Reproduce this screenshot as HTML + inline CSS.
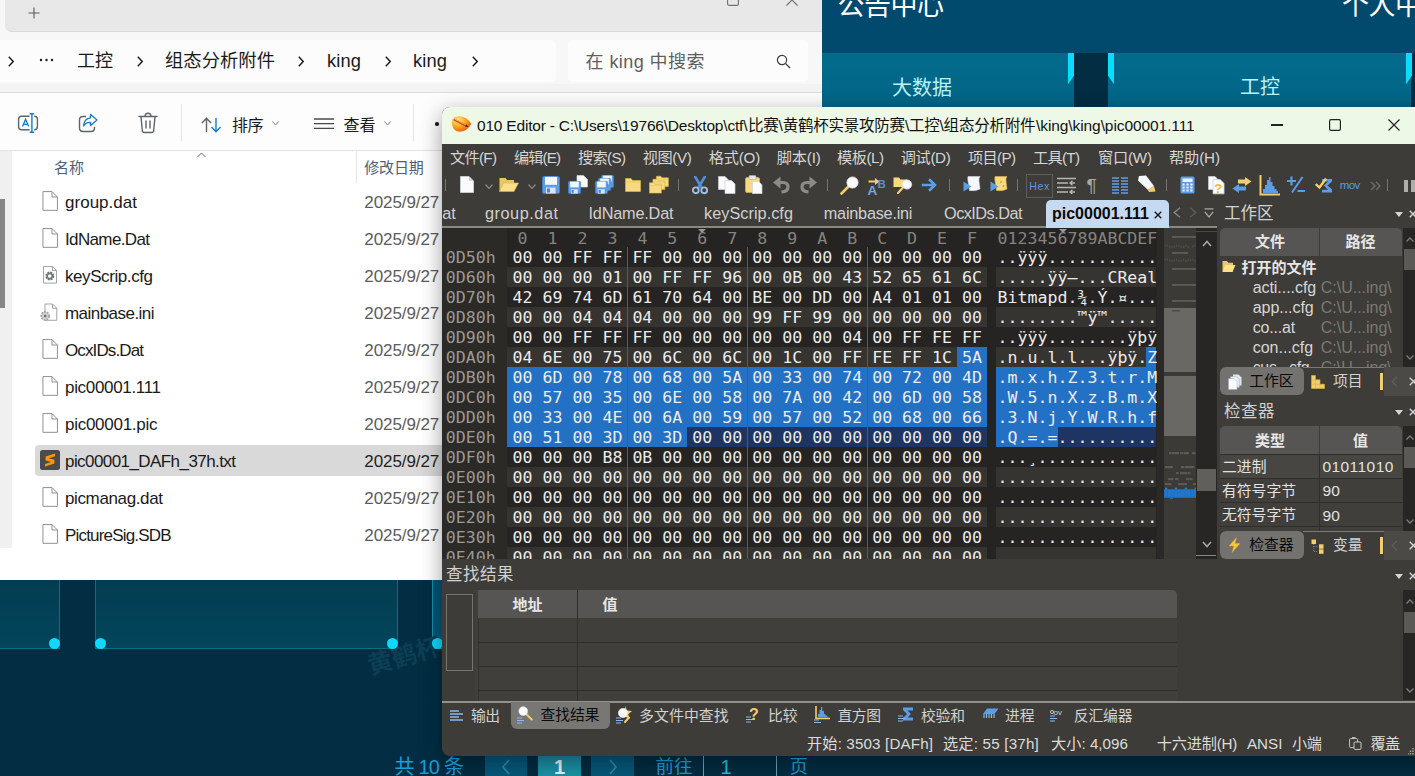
<!DOCTYPE html><html lang="zh-CN"><head><meta charset="utf-8"><title>010 Editor</title><style>
html,body{margin:0;padding:0}
body{width:1415px;height:776px;overflow:hidden;position:relative;background:#022d42;font-family:"Liberation Sans","Noto Sans CJK SC",sans-serif}
.L{position:absolute;overflow:hidden}
.L div,.L span.t,.L svg{position:absolute}
span.t{white-space:pre;display:block}
</style></head><body>
<div class="L" id="web" style="left:0;top:0;width:1415px;height:776px"><div style="left:0px;top:0px;width:1415px;height:53px;background:#014a6e;"></div>
<span class="t" style="left:837.5px;top:-11.00px;font:400 27px/35px 'Liberation Sans','Noto Sans CJK SC',sans-serif;color:#ffffff;letter-spacing:-0.500px;">公告中心</span>
<span class="t" style="left:1342px;top:-11.00px;font:400 27px/35px 'Liberation Sans','Noto Sans CJK SC',sans-serif;color:#ffffff;letter-spacing:-0.500px;">个人中心</span>
<div style="left:560px;top:53px;width:513.7px;height:54px;background:linear-gradient(#026b8c,#026586);"></div>
<div style="left:1108px;top:53px;width:303px;height:54px;background:linear-gradient(#026b8c,#026586);"></div>
<svg style="left:1067.8px;top:53px" width="6" height="32" viewBox="0 0 6 32"><polygon points="0,0 6,0 6,22.6 0,31.2" fill="#08defc"/></svg>
<svg style="left:1108px;top:53px" width="6" height="32" viewBox="0 0 6 32"><polygon points="0,0 6,0 6,31.2 0,22.6" fill="#08defc"/></svg>
<svg style="left:1405.5px;top:53px" width="6" height="32" viewBox="0 0 6 32"><polygon points="0,0 6,0 6,22.6 0,31.2" fill="#08defc"/></svg>
<span class="t" style="left:892px;top:74.50px;font:400 20px/26px 'Liberation Sans','Noto Sans CJK SC',sans-serif;color:#b8f4ff;">大数据</span>
<span class="t" style="left:1240px;top:74.00px;font:400 20px/26px 'Liberation Sans','Noto Sans CJK SC',sans-serif;color:#b8f4ff;">工控</span>
<div style="left:-10px;top:560px;width:69.5px;height:88.5px;background:linear-gradient(#033a4e,#03455b);border:1px solid #0e6d80;box-sizing:border-box;"></div>
<div style="left:94.5px;top:560px;width:303px;height:88.5px;background:linear-gradient(#033a4e,#03455b);border:1px solid #0e6d80;box-sizing:border-box;"></div>
<div style="left:432px;top:560px;width:303px;height:88.5px;background:linear-gradient(#04506f,#045a7c);border:1px solid #1590a8;box-sizing:border-box;"></div>
<span class="t" style="left:368px;top:650.00px;font:700 25px/32px 'Liberation Sans','Noto Sans CJK SC',sans-serif;color:#0b3f54;transform:rotate(-16deg);transform-origin:0 50%;">黄鹤杯</span>
<div style="left:48.5px;top:637.5px;width:11px;height:11px;background:#10d8fa;border-radius:50%;"></div>
<div style="left:94.5px;top:637.5px;width:11px;height:11px;background:#10d8fa;border-radius:50%;"></div>
<div style="left:386.5px;top:637.5px;width:11px;height:11px;background:#10d8fa;border-radius:50%;"></div>
<div style="left:431.5px;top:637.5px;width:11px;height:11px;background:#10d8fa;border-radius:50%;"></div>
<span class="t" style="left:394.5px;top:753.50px;font:400 20px/26px 'Liberation Sans','Noto Sans CJK SC',sans-serif;color:#1a9fd8;letter-spacing:-0.772px;">共 10 条</span>
<div style="left:485px;top:752px;width:42px;height:30px;background:#06587b;"></div>
<div style="left:538px;top:752px;width:43px;height:30px;background:linear-gradient(#1c8aa2,#1a96a8);"></div>
<div style="left:590.75px;top:752px;width:43px;height:30px;background:#06587b;"></div>
<svg style="left:501px;top:759px" width="10" height="16" viewBox="0 0 10 16"><path d="M8 1 L2 8 L8 15" fill="none" stroke="#2a8fb0" stroke-width="1.6"/></svg>
<svg style="left:608px;top:759px" width="10" height="16" viewBox="0 0 10 16"><path d="M2 1 L8 8 L2 15" fill="none" stroke="#2a8fb0" stroke-width="1.6"/></svg>
<span class="t" style="left:559.5px;top:754.00px;font:700 20px/26px 'Liberation Sans','Noto Sans CJK SC',sans-serif;color:#e8f4f8;transform:translateX(-50%);">1</span>
<span class="t" style="left:655.5px;top:754.50px;font:400 18.5px/24px 'Liberation Sans','Noto Sans CJK SC',sans-serif;color:#1a9fd8;letter-spacing:-0.016px;">前往</span>
<div style="left:703px;top:740px;width:73.5px;height:40px;border-left:1px solid #6fa3b8;border-right:1px solid #6fa3b8;box-sizing:border-box;"></div>
<span class="t" style="left:720.5px;top:754.00px;font:400 20px/26px 'Liberation Sans','Noto Sans CJK SC',sans-serif;color:#22c4dc;">1</span>
<span class="t" style="left:789.5px;top:754.50px;font:400 18.5px/24px 'Liberation Sans','Noto Sans CJK SC',sans-serif;color:#1a9fd8;">页</span></div>
<div class="L" id="exp" style="left:0;top:0;width:822px;height:579.5px;background:#fff"><div style="left:0px;top:0px;width:822px;height:93px;background:#f7f7f7;"></div>
<div style="left:5px;top:-8px;width:830px;height:39.3px;background:#e8e8e8;border-radius:7px;border-bottom:1px solid #dadada;"></div>
<svg style="left:28px;top:7px" width="12" height="12" viewBox="0 0 12 12"><path d="M6 0.5V11.5M0.5 6H11.5" stroke="#5a5a5a" stroke-width="1.1"/></svg>
<svg style="left:727px;top:-6px" width="12" height="12" viewBox="0 0 12 12"><rect x="0.6" y="0.6" width="10.8" height="10.8" rx="1.5" fill="none" stroke="#707070" stroke-width="1.1"/></svg>
<svg style="left:786px;top:-6px" width="12" height="12" viewBox="0 0 12 12"><path d="M0.5 0.5L11.5 11.5M11.5 0.5L0.5 11.5" stroke="#707070" stroke-width="1.1"/></svg>
<div style="left:-10px;top:40px;width:566px;height:42px;background:#fcfcfc;border-radius:5px;"></div>
<div style="left:0px;top:84px;width:822px;height:8px;background:#f3f3f3;"></div>
<div style="left:568px;top:40px;width:240px;height:42px;background:#fcfcfc;border-radius:5px;"></div>
<svg style="left:8.0px;top:56.4px" width="6" height="11" viewBox="0 0 6 11"><path d="M0.8 0.8L5.2 5.5L0.8 10.2" fill="none" stroke="#1a1a1a" stroke-width="1.4"/></svg>
<svg style="left:136.5px;top:56.4px" width="6" height="11" viewBox="0 0 6 11"><path d="M0.8 0.8L5.2 5.5L0.8 10.2" fill="none" stroke="#1a1a1a" stroke-width="1.4"/></svg>
<svg style="left:298.0px;top:56.4px" width="6" height="11" viewBox="0 0 6 11"><path d="M0.8 0.8L5.2 5.5L0.8 10.2" fill="none" stroke="#1a1a1a" stroke-width="1.4"/></svg>
<svg style="left:385.0px;top:56.4px" width="6" height="11" viewBox="0 0 6 11"><path d="M0.8 0.8L5.2 5.5L0.8 10.2" fill="none" stroke="#1a1a1a" stroke-width="1.4"/></svg>
<svg style="left:471.5px;top:56.4px" width="6" height="11" viewBox="0 0 6 11"><path d="M0.8 0.8L5.2 5.5L0.8 10.2" fill="none" stroke="#1a1a1a" stroke-width="1.4"/></svg>
<svg style="left:39px;top:58px" width="15" height="4" viewBox="0 0 15 4"><circle cx="2" cy="2" r="1.2" fill="#1a1a1a"/><circle cx="7.5" cy="2" r="1.2" fill="#1a1a1a"/><circle cx="13" cy="2" r="1.2" fill="#1a1a1a"/></svg>
<span class="t" style="left:77px;top:49.90px;font:400 18px/23px 'Liberation Sans','Noto Sans CJK SC',sans-serif;color:#1a1a1a;">工控</span>
<span class="t" style="left:165px;top:49.40px;font:400 18.3px/24px 'Liberation Sans','Noto Sans CJK SC',sans-serif;color:#1a1a1a;letter-spacing:0.062px;">组态分析附件</span>
<span class="t" style="left:327px;top:49.20px;font:400 18.3px/24px 'Liberation Sans','Noto Sans CJK SC',sans-serif;color:#1a1a1a;letter-spacing:0.151px;">king</span>
<span class="t" style="left:413px;top:49.20px;font:400 18.3px/24px 'Liberation Sans','Noto Sans CJK SC',sans-serif;color:#1a1a1a;letter-spacing:0.151px;">king</span>
<span class="t" style="left:585.5px;top:50.70px;font:400 18px/23px 'Liberation Sans','Noto Sans CJK SC',sans-serif;color:#5f5f5f;letter-spacing:0.441px;">在 king 中搜索</span>
<svg style="left:776px;top:54px" width="15" height="15" viewBox="0 0 15 15"><circle cx="6" cy="6" r="4.6" fill="none" stroke="#3a3a3a" stroke-width="1.2"/><path d="M9.4 9.4L14 14" stroke="#3a3a3a" stroke-width="1.3"/></svg>
<div style="left:0px;top:92px;width:822px;height:1px;background:#dcdcdc;"></div>
<div style="left:0px;top:93px;width:822px;height:57px;background:#fdfdfd;"></div>
<div style="left:0px;top:150px;width:822px;height:1px;background:#e3e3e3;"></div>
<svg style="left:17px;top:112.6px" width="22" height="20" viewBox="0 0 22 20"><path d="M12.6 3.2H4.5Q1.6 3.2 1.6 6.2V13.8Q1.6 16.8 4.5 16.8H12.6M17.2 3.2Q20.4 3.2 20.4 6.2V13.8Q20.4 16.8 17.2 16.8" fill="none" stroke="#5e6468" stroke-width="1.4"/><path d="M5.6 13.6L8.6 6.2L11.6 13.6M6.6 11.3H10.6" fill="none" stroke="#1479d0" stroke-width="1.3"/><path d="M14.9 0.7V19.3M12.6 0.7H17.2M12.6 19.3H17.2" stroke="#1479d0" stroke-width="1.4"/></svg>
<svg style="left:78px;top:113.4px" width="21" height="21" viewBox="0 0 21 21"><path d="M8 3.5H5Q1.5 3.5 1.5 7V15Q1.5 18.5 5 18.5H13Q16.5 18.5 16.5 15V14" fill="none" stroke="#5e6468" stroke-width="1.4"/><path d="M12.5 1.5L19 7L12.5 12.5V9.3Q8 9 5.5 13Q6 5.5 12.5 4.8Z" fill="none" stroke="#1479d0" stroke-width="1.3" stroke-linejoin="round"/></svg>
<svg style="left:138px;top:112.3px" width="20" height="22" viewBox="0 0 20 22"><path d="M1 4.5H19M7 4.3Q7 1.2 10 1.2Q13 1.2 13 4.3M3 4.8L4.3 18.5Q4.5 20.5 6.5 20.5H13.5Q15.5 20.5 15.7 18.5L17 4.8M8 9V16M12 9V16" fill="none" stroke="#5e6468" stroke-width="1.4" stroke-linecap="round"/></svg>
<div style="left:181px;top:104px;width:1px;height:37px;background:#e6e6e6;"></div>
<svg style="left:201px;top:116.5px" width="21" height="16" viewBox="0 0 21 16"><path d="M5.5 15V1.5M1 6L5.5 1.2L10 6" fill="none" stroke="#5e6468" stroke-width="1.4"/><path d="M15 1V14.5M10.5 10L15 14.8L19.5 10" fill="none" stroke="#1479d0" stroke-width="1.4"/></svg>
<span class="t" style="left:232px;top:114.50px;font:400 16px/21px 'Liberation Sans','Noto Sans CJK SC',sans-serif;color:#1a1a1a;letter-spacing:-0.516px;">排序</span>
<svg style="left:271.5px;top:120.5px" width="7" height="5" viewBox="0 0 7 5"><path d="M0.5 0.5L3.5 4L6.5 0.5" fill="none" stroke="#7a7a7a" stroke-width="1"/></svg>
<svg style="left:313.5px;top:118.3px" width="20" height="12" viewBox="0 0 20 12"><path d="M0 1H20M0 5.65H20M0 10.3H20" stroke="#4a4a4a" stroke-width="1.3"/></svg>
<span class="t" style="left:343.5px;top:114.50px;font:400 16px/21px 'Liberation Sans','Noto Sans CJK SC',sans-serif;color:#1a1a1a;letter-spacing:-0.016px;">查看</span>
<svg style="left:383.5px;top:120.5px" width="7" height="5" viewBox="0 0 7 5"><path d="M0.5 0.5L3.5 4L6.5 0.5" fill="none" stroke="#7a7a7a" stroke-width="1"/></svg>
<div style="left:413px;top:104px;width:1px;height:37px;background:#e6e6e6;"></div>
<div style="left:435.2px;top:122.2px;width:3.6px;height:3.6px;background:#1a1a1a;border-radius:50%;"></div>
<div style="left:0px;top:151px;width:12px;height:397px;background:#f0f0f0;"></div>
<div style="left:0px;top:199px;width:5px;height:108.5px;background:#868686;"></div>
<svg style="left:197px;top:151.5px" width="9" height="6" viewBox="0 0 9 6"><path d="M0.5 5L4.5 1L8.5 5" fill="none" stroke="#6a6a6a" stroke-width="1"/></svg>
<span class="t" style="left:54px;top:157.70px;font:400 15px/20px 'Liberation Sans','Noto Sans CJK SC',sans-serif;color:#4c607a;letter-spacing:-0.016px;">名称</span>
<div style="left:356px;top:151px;width:1px;height:32px;background:#e5e5e5;"></div>
<span class="t" style="left:364.3px;top:157.70px;font:400 15px/20px 'Liberation Sans','Noto Sans CJK SC',sans-serif;color:#4c607a;letter-spacing:-0.172px;">修改日期</span>
<svg style="left:41.8px;top:190.9px" width="16.2" height="20" viewBox="0 0 17 21"><path d="M1 0.6H10.5L16.2 6.3V20.3H1Z" fill="#fff" stroke="#8c8c8c" stroke-width="1"/><path d="M10.5 0.6V6.3H16.2" fill="none" stroke="#8c8c8c" stroke-width="1"/></svg>
<span class="t" style="left:65px;top:192.00px;font:400 17px/22px 'Liberation Sans','Noto Sans CJK SC',sans-serif;color:#1a1a1a;letter-spacing:0.020px;">group.dat</span>
<span class="t" style="left:364.3px;top:192.00px;font:400 17px/22px 'Liberation Sans','Noto Sans CJK SC',sans-serif;color:#5c5c5c;letter-spacing:-0.081px;">2025/9/27 1</span>
<svg style="left:41.8px;top:227.95000000000002px" width="16.2" height="20" viewBox="0 0 17 21"><path d="M1 0.6H10.5L16.2 6.3V20.3H1Z" fill="#fff" stroke="#8c8c8c" stroke-width="1"/><path d="M10.5 0.6V6.3H16.2" fill="none" stroke="#8c8c8c" stroke-width="1"/></svg>
<span class="t" style="left:65px;top:229.05px;font:400 17px/22px 'Liberation Sans','Noto Sans CJK SC',sans-serif;color:#1a1a1a;letter-spacing:-0.634px;">IdName.Dat</span>
<span class="t" style="left:364.3px;top:229.05px;font:400 17px/22px 'Liberation Sans','Noto Sans CJK SC',sans-serif;color:#5c5c5c;letter-spacing:-0.081px;">2025/9/27 1</span>
<svg style="left:43px;top:266.20000000000005px" width="14" height="17.6" viewBox="0 0 14 17.6"><path d="M0.5 0.5H9.5L13.5 4.5V17.1H0.5Z" fill="#fff" stroke="#9a9a9a" stroke-width="0.9"/><path d="M9.5 0.5V4.5H13.5" fill="none" stroke="#9a9a9a" stroke-width="0.9"/><circle cx="6.8" cy="10" r="3.3" fill="none" stroke="#6b7478" stroke-width="2.3" stroke-dasharray="1.75 0.85"/><circle cx="6.8" cy="10" r="2.6" fill="none" stroke="#6b7478" stroke-width="1.5"/></svg>
<span class="t" style="left:65px;top:266.10px;font:400 17px/22px 'Liberation Sans','Noto Sans CJK SC',sans-serif;color:#1a1a1a;letter-spacing:-0.418px;">keyScrip.cfg</span>
<span class="t" style="left:364.3px;top:266.10px;font:400 17px/22px 'Liberation Sans','Noto Sans CJK SC',sans-serif;color:#5c5c5c;letter-spacing:-0.081px;">2025/9/27 1</span>
<svg style="left:40px;top:302.04999999999995px" width="19" height="21" viewBox="-2 0 19 21"><path d="M3 2H10.5L14.8 6.3V18.3H3Z" fill="#fff" stroke="#9a9a9a" stroke-width="0.9"/><path d="M10.5 2V6.3H14.8" fill="none" stroke="#9a9a9a" stroke-width="0.9"/><circle cx="3.2" cy="14" r="3.9" fill="#d4d4d4" stroke="#a2a6a8" stroke-width="2" stroke-dasharray="1.8 1"/><circle cx="3.2" cy="14" r="3" fill="#d0d0d0"/><circle cx="3.2" cy="14" r="1.3" fill="#6a6a6a"/></svg>
<span class="t" style="left:65px;top:303.15px;font:400 17px/22px 'Liberation Sans','Noto Sans CJK SC',sans-serif;color:#1a1a1a;letter-spacing:-0.541px;">mainbase.ini</span>
<span class="t" style="left:364.3px;top:303.15px;font:400 17px/22px 'Liberation Sans','Noto Sans CJK SC',sans-serif;color:#5c5c5c;letter-spacing:-0.081px;">2025/9/27 1</span>
<svg style="left:41.8px;top:339.09999999999997px" width="16.2" height="20" viewBox="0 0 17 21"><path d="M1 0.6H10.5L16.2 6.3V20.3H1Z" fill="#fff" stroke="#8c8c8c" stroke-width="1"/><path d="M10.5 0.6V6.3H16.2" fill="none" stroke="#8c8c8c" stroke-width="1"/></svg>
<span class="t" style="left:65px;top:340.20px;font:400 17px/22px 'Liberation Sans','Noto Sans CJK SC',sans-serif;color:#1a1a1a;letter-spacing:-0.878px;">OcxIDs.Dat</span>
<span class="t" style="left:364.3px;top:340.20px;font:400 17px/22px 'Liberation Sans','Noto Sans CJK SC',sans-serif;color:#5c5c5c;letter-spacing:-0.081px;">2025/9/27 1</span>
<svg style="left:41.8px;top:376.15px" width="16.2" height="20" viewBox="0 0 17 21"><path d="M1 0.6H10.5L16.2 6.3V20.3H1Z" fill="#fff" stroke="#8c8c8c" stroke-width="1"/><path d="M10.5 0.6V6.3H16.2" fill="none" stroke="#8c8c8c" stroke-width="1"/></svg>
<span class="t" style="left:65px;top:377.25px;font:400 17px/22px 'Liberation Sans','Noto Sans CJK SC',sans-serif;color:#1a1a1a;letter-spacing:-0.325px;">pic00001.111</span>
<span class="t" style="left:364.3px;top:377.25px;font:400 17px/22px 'Liberation Sans','Noto Sans CJK SC',sans-serif;color:#5c5c5c;letter-spacing:-0.081px;">2025/9/27 1</span>
<svg style="left:41.8px;top:413.19999999999993px" width="16.2" height="20" viewBox="0 0 17 21"><path d="M1 0.6H10.5L16.2 6.3V20.3H1Z" fill="#fff" stroke="#8c8c8c" stroke-width="1"/><path d="M10.5 0.6V6.3H16.2" fill="none" stroke="#8c8c8c" stroke-width="1"/></svg>
<span class="t" style="left:65px;top:414.30px;font:400 17px/22px 'Liberation Sans','Noto Sans CJK SC',sans-serif;color:#1a1a1a;letter-spacing:-0.270px;">pic00001.pic</span>
<span class="t" style="left:364.3px;top:414.30px;font:400 17px/22px 'Liberation Sans','Noto Sans CJK SC',sans-serif;color:#5c5c5c;letter-spacing:-0.081px;">2025/9/27 1</span>
<div style="left:35px;top:444.9px;width:800px;height:30.9px;background:#d9d9d9;border-radius:4px;"></div>
<svg style="left:40px;top:449.84999999999997px" width="20" height="20" viewBox="0 0 20 20"><rect width="20" height="20" rx="2.5" fill="#4b4b4b"/><path d="M15 3.6L5.6 6.6V10.4L11.2 11.9L5 13.9V16.6L14.4 13.6V9.8L8.8 8.3L15 6.3Z" fill="#ff9800"/></svg>
<span class="t" style="left:65px;top:451.35px;font:400 17px/22px 'Liberation Sans','Noto Sans CJK SC',sans-serif;color:#1a1a1a;letter-spacing:-0.570px;">pic00001_DAFh_37h.txt</span>
<span class="t" style="left:364.3px;top:451.35px;font:400 17px/22px 'Liberation Sans','Noto Sans CJK SC',sans-serif;color:#1f1f1f;letter-spacing:-0.081px;">2025/9/27 1</span>
<svg style="left:41.8px;top:487.29999999999995px" width="16.2" height="20" viewBox="0 0 17 21"><path d="M1 0.6H10.5L16.2 6.3V20.3H1Z" fill="#fff" stroke="#8c8c8c" stroke-width="1"/><path d="M10.5 0.6V6.3H16.2" fill="none" stroke="#8c8c8c" stroke-width="1"/></svg>
<span class="t" style="left:65px;top:488.40px;font:400 17px/22px 'Liberation Sans','Noto Sans CJK SC',sans-serif;color:#1a1a1a;letter-spacing:-0.371px;">picmanag.dat</span>
<span class="t" style="left:364.3px;top:488.40px;font:400 17px/22px 'Liberation Sans','Noto Sans CJK SC',sans-serif;color:#5c5c5c;letter-spacing:-0.081px;">2025/9/27 1</span>
<svg style="left:41.8px;top:524.35px" width="16.2" height="20" viewBox="0 0 17 21"><path d="M1 0.6H10.5L16.2 6.3V20.3H1Z" fill="#fff" stroke="#8c8c8c" stroke-width="1"/><path d="M10.5 0.6V6.3H16.2" fill="none" stroke="#8c8c8c" stroke-width="1"/></svg>
<span class="t" style="left:65px;top:525.45px;font:400 17px/22px 'Liberation Sans','Noto Sans CJK SC',sans-serif;color:#1a1a1a;letter-spacing:-0.821px;">PictureSig.SDB</span>
<span class="t" style="left:364.3px;top:525.45px;font:400 17px/22px 'Liberation Sans','Noto Sans CJK SC',sans-serif;color:#5c5c5c;letter-spacing:-0.081px;">2025/9/27 1</span></div>
<div id="shadow" style="position:absolute;left:442px;top:107px;width:990px;height:649px;border-radius:8px;box-shadow:0 6px 22px rgba(0,0,0,.38)"></div>
<div class="L" id="ed" style="left:0;top:0;width:1415px;height:776px;clip-path:inset(107px -20px 20px 442px round 8px)"><div style="left:430px;top:100px;width:1000px;height:680px;background:#3e3c38;"></div>
<div style="left:430px;top:100px;width:1000px;height:44px;background:#eef8e6;"></div>
<svg style="left:450.5px;top:115px" width="21" height="18" viewBox="0 0 21 18"><defs><radialGradient id="og" cx="30%" cy="25%" r="85%"><stop offset="0" stop-color="#ffe88a"/><stop offset="0.4" stop-color="#ffb424"/><stop offset="1" stop-color="#e4520e"/></radialGradient></defs><path d="M0.8 7.5Q1 1 8.5 1.2Q16.5 1.8 20.3 9Q16 16.8 8.5 16.8Q1 16 0.8 7.5Z" fill="url(#og)"/><path d="M3.2 3.6L15.2 9.6L17.8 12L14.2 11.4L2.4 5.2Z" fill="#c9452c"/><path d="M3.6 4.1L14.6 9.7" stroke="#f6c95e" stroke-width="0.9"/><path d="M15.2 9.6L17.8 12L14.2 11.4Z" fill="#3a2a20"/></svg>
<span class="t" style="left:477px;top:115.50px;font:400 15.5px/20px 'Liberation Sans','Noto Sans CJK SC',sans-serif;color:#111;letter-spacing:-0.200px;">010 Editor - C:\Users\19766\Desktop\ctf\</span>
<span class="t" style="left:748px;top:115.50px;font:400 15.5px/20px 'Liberation Sans','Noto Sans CJK SC',sans-serif;color:#111;letter-spacing:-0.221px;">比赛\黄鹤杯实景攻防赛\工控\组态分析附件</span>
<span class="t" style="left:1036px;top:115.50px;font:400 15.5px/20px 'Liberation Sans','Noto Sans CJK SC',sans-serif;color:#111;letter-spacing:-0.083px;">\king\king\pic00001.111</span>
<div style="left:1271px;top:124.4px;width:12px;height:1.3px;background:#222;"></div>
<svg style="left:1329px;top:119px" width="12" height="12" viewBox="0 0 12 12"><rect x="0.6" y="0.6" width="10.8" height="10.8" rx="1.3" fill="none" stroke="#222" stroke-width="1.2"/></svg>
<svg style="left:1388px;top:119px" width="12" height="12" viewBox="0 0 12 12"><path d="M0.5 0.5L11.5 11.5M11.5 0.5L0.5 11.5" stroke="#222" stroke-width="1.2"/></svg>
<span class="t" style="left:450px;top:148.00px;font:400 15.2px/20px 'Liberation Sans','Noto Sans CJK SC',sans-serif;color:#d6d6d6;letter-spacing:-0.695px;">文件(F)</span>
<span class="t" style="left:514px;top:148.00px;font:400 15.2px/20px 'Liberation Sans','Noto Sans CJK SC',sans-serif;color:#d6d6d6;letter-spacing:-0.906px;">编辑(E)</span>
<span class="t" style="left:578px;top:148.00px;font:400 15.2px/20px 'Liberation Sans','Noto Sans CJK SC',sans-serif;color:#d6d6d6;letter-spacing:-0.656px;">搜索(S)</span>
<span class="t" style="left:642.75px;top:148.00px;font:400 15.2px/20px 'Liberation Sans','Noto Sans CJK SC',sans-serif;color:#d6d6d6;letter-spacing:-0.406px;">视图(V)</span>
<span class="t" style="left:708.75px;top:148.00px;font:400 15.2px/20px 'Liberation Sans','Noto Sans CJK SC',sans-serif;color:#d6d6d6;letter-spacing:-0.203px;">格式(O)</span>
<span class="t" style="left:776.75px;top:148.00px;font:400 15.2px/20px 'Liberation Sans','Noto Sans CJK SC',sans-serif;color:#d6d6d6;letter-spacing:-0.180px;">脚本(I)</span>
<span class="t" style="left:837px;top:148.00px;font:400 15.2px/20px 'Liberation Sans','Noto Sans CJK SC',sans-serif;color:#d6d6d6;letter-spacing:-0.484px;">模板(L)</span>
<span class="t" style="left:900.75px;top:148.00px;font:400 15.2px/20px 'Liberation Sans','Noto Sans CJK SC',sans-serif;color:#d6d6d6;letter-spacing:-0.367px;">调试(D)</span>
<span class="t" style="left:968px;top:148.00px;font:400 15.2px/20px 'Liberation Sans','Noto Sans CJK SC',sans-serif;color:#d6d6d6;letter-spacing:-0.656px;">项目(P)</span>
<span class="t" style="left:1033px;top:148.00px;font:400 15.2px/20px 'Liberation Sans','Noto Sans CJK SC',sans-serif;color:#d6d6d6;letter-spacing:-0.695px;">工具(T)</span>
<span class="t" style="left:1098px;top:148.00px;font:400 15.2px/20px 'Liberation Sans','Noto Sans CJK SC',sans-serif;color:#d6d6d6;letter-spacing:-0.207px;">窗口(W)</span>
<span class="t" style="left:1169px;top:148.00px;font:400 15.2px/20px 'Liberation Sans','Noto Sans CJK SC',sans-serif;color:#d6d6d6;letter-spacing:-0.117px;">帮助(H)</span>
<div style="left:445.1px;top:179px;width:1px;height:12px;background:#77756f;"></div>
<svg style="left:460px;top:176px" width="14" height="17" viewBox="0 0 14 17"><path d="M0.5 0.5H9L13.5 5V16.5H0.5Z" fill="#fbfbfb" stroke="#d0d6e0" stroke-width="0.8"/><path d="M9 0.5V5H13.5Z" fill="#c9d2e0"/></svg>
<svg style="left:485.0px;top:183.75px" width="8" height="5.5" viewBox="0 0 8 5.5"><path d="M0.5 0.5L4.0 4.5L7.5 0.5" fill="none" stroke="#8a8884" stroke-width="1.2"/></svg>
<svg style="left:498.5px;top:176px" width="20" height="17" viewBox="0 0 20 17"><path d="M0.5 2H6.5L8 4H15V15H0.5Z" fill="#e9c766"/><path d="M4.5 7H19.5L15 15.5H0.5Z" fill="#fbe08c" stroke="#d9b24a" stroke-width="0.6"/></svg>
<svg style="left:527.5px;top:183.75px" width="8" height="5.5" viewBox="0 0 8 5.5"><path d="M0.5 0.5L4.0 4.5L7.5 0.5" fill="none" stroke="#8a8884" stroke-width="1.2"/></svg>
<svg style="left:542px;top:175.5px" width="18" height="18" viewBox="0 0 18 18"><rect x="0.5" y="0.5" width="17" height="17" rx="1.5" fill="#5d9de6" stroke="#3f7fd0" stroke-width="0.8"/><rect x="3" y="0.8" width="12" height="8" fill="#f3f7fc"/><rect x="4" y="11.5" width="9.5" height="6" fill="#d8e6f8"/><rect x="5" y="12.5" width="3" height="4" fill="#4a86d6"/></svg>
<svg style="left:568px;top:175px" width="20" height="19" viewBox="0 0 20 19"><path d="M9 0.5H15.5L19.5 4.5V12H9Z" fill="#fbfbfb" stroke="#c9d2e0" stroke-width="0.7"/><g transform="translate(0 6) scale(0.72)"><rect x="0.5" y="0.5" width="17" height="17" rx="1.5" fill="#5d9de6" stroke="#3f7fd0" stroke-width="0.8"/><rect x="3" y="0.8" width="12" height="8" fill="#f3f7fc"/><rect x="4" y="11.5" width="9.5" height="6" fill="#d8e6f8"/><rect x="5" y="12.5" width="3" height="4" fill="#4a86d6"/></g></svg>
<svg style="left:595px;top:175px" width="20" height="19" viewBox="0 0 20 19"><g transform="translate(6 0) scale(0.72)"><rect x="0.5" y="0.5" width="17" height="17" rx="1.5" fill="#5d9de6" stroke="#3f7fd0" stroke-width="0.8"/><rect x="3" y="0.8" width="12" height="8" fill="#f3f7fc"/><rect x="4" y="11.5" width="9.5" height="6" fill="#d8e6f8"/><rect x="5" y="12.5" width="3" height="4" fill="#4a86d6"/></g><g transform="translate(3 3) scale(0.72)"><rect x="0.5" y="0.5" width="17" height="17" rx="1.5" fill="#5d9de6" stroke="#3f7fd0" stroke-width="0.8"/><rect x="3" y="0.8" width="12" height="8" fill="#f3f7fc"/><rect x="4" y="11.5" width="9.5" height="6" fill="#d8e6f8"/><rect x="5" y="12.5" width="3" height="4" fill="#4a86d6"/></g><g transform="translate(0 6) scale(0.72)"><rect x="0.5" y="0.5" width="17" height="17" rx="1.5" fill="#5d9de6" stroke="#3f7fd0" stroke-width="0.8"/><rect x="3" y="0.8" width="12" height="8" fill="#f3f7fc"/><rect x="4" y="11.5" width="9.5" height="6" fill="#d8e6f8"/><rect x="5" y="12.5" width="3" height="4" fill="#4a86d6"/></g></svg>
<svg style="left:625px;top:177px" width="16" height="16" viewBox="0 0 16 16"><path d="M0.5 1.5H6L7.5 3.5H15.5V14.5H0.5Z" fill="#f7da80" stroke="#d9b24a" stroke-width="0.7"/><path d="M0.5 5H15.5" stroke="#e5c260" stroke-width="0.7"/></svg>
<svg style="left:648.5px;top:175px" width="21" height="19" viewBox="0 0 21 19"><g transform="translate(7 0) scale(0.8)"><path d="M0.5 1.5H6L7.5 3.5H15.5V14.5H0.5Z" fill="#f7da80" stroke="#d9b24a" stroke-width="0.7"/><path d="M0.5 5H15.5" stroke="#e5c260" stroke-width="0.7"/></g><g transform="translate(3.5 3) scale(0.8)"><path d="M0.5 1.5H6L7.5 3.5H15.5V14.5H0.5Z" fill="#f7da80" stroke="#d9b24a" stroke-width="0.7"/><path d="M0.5 5H15.5" stroke="#e5c260" stroke-width="0.7"/></g><g transform="translate(0 6.5) scale(0.8)"><path d="M0.5 1.5H6L7.5 3.5H15.5V14.5H0.5Z" fill="#f7da80" stroke="#d9b24a" stroke-width="0.7"/><path d="M0.5 5H15.5" stroke="#e5c260" stroke-width="0.7"/></g></svg>
<div style="left:678.2px;top:179px;width:1px;height:12px;background:#77756f;"></div>
<svg style="left:692px;top:175.5px" width="16" height="19" viewBox="0 0 16 19"><path d="M3.2 0.8L9.6 11.5M12.8 0.8L6.4 11.5" stroke="#4f8fdc" stroke-width="2.6" stroke-linecap="round"/><circle cx="3.8" cy="14.3" r="2.9" fill="none" stroke="#9dbfe8" stroke-width="1.9"/><circle cx="12.2" cy="14.3" r="2.9" fill="none" stroke="#9dbfe8" stroke-width="1.9"/></svg>
<svg style="left:717.5px;top:176px" width="18" height="18" viewBox="0 0 18 18"><path d="M0.5 0.5H7L10.5 4V13.5H0.5Z" fill="#fbfbfb" stroke="#c9d2e0" stroke-width="0.7"/><g transform="translate(6.5 4)"><path d="M0.5 0.5H7L10.5 4V13.5H0.5Z" fill="#fbfbfb" stroke="#c9d2e0" stroke-width="0.7"/></g></svg>
<svg style="left:745px;top:175px" width="18" height="19" viewBox="0 0 18 19"><rect x="0.5" y="2.5" width="14" height="15" rx="1.5" fill="#f7da80" stroke="#d9b24a" stroke-width="0.7"/><rect x="4" y="0.5" width="7" height="4" rx="1" fill="#e8e8e8" stroke="#aaa" stroke-width="0.6"/><g transform="translate(7 6) scale(0.95)"><path d="M0.5 0.5H7L10.5 4V13.5H0.5Z" fill="#fbfbfb" stroke="#c9d2e0" stroke-width="0.7"/></g></svg>
<svg style="left:771.5px;top:175.5px" width="19" height="18" viewBox="0 0 19 18"><path d="M1 6.5L8.5 0.5V12.5Z" fill="#8d8b86"/><path d="M7 6.5H11Q16 6.5 16 11Q16 15.5 9.5 16" fill="none" stroke="#8d8b86" stroke-width="3.2"/></svg>
<svg style="left:798.5px;top:175.5px" width="19" height="18" viewBox="0 0 19 18"><path d="M18 6.5L10.5 0.5V12.5Z" fill="#8d8b86"/><path d="M12 6.5H8Q3 6.5 3 11Q3 15.5 9.5 16" fill="none" stroke="#8d8b86" stroke-width="3.2"/></svg>
<div style="left:827.0px;top:179px;width:1px;height:12px;background:#77756f;"></div>
<svg style="left:839.5px;top:175.5px" width="20" height="19" viewBox="0 0 20 19"><path d="M1.5 17.5L9 10" stroke="#f2cf6a" stroke-width="2.6" stroke-linecap="round"/><circle cx="12.5" cy="6.5" r="5.6" fill="#fbfcfe" stroke="#e6e9ee" stroke-width="0.8"/></svg>
<svg style="left:866.5px;top:175.5px" width="20" height="19" viewBox="0 0 20 19"><path d="M1.5 4.5H8V2L12.5 5.5L8 9V6.5H1.5Z" fill="#f2cf6a"/><text x="0.5" y="18.5" font-family="Liberation Sans" font-weight="700" font-size="13.5" fill="#6ea6e8">A</text><text x="10.5" y="12" font-family="Liberation Sans" font-weight="700" font-size="11.5" fill="#5a8fd0">B</text></svg>
<svg style="left:892.5px;top:176px" width="20" height="18" viewBox="0 0 20 18"><path d="M0.5 1.5H6L7.5 3.5H14V11H0.5Z" fill="#f7da80"/><path d="M5 17L10 11.5" stroke="#f2cf6a" stroke-width="2.2" stroke-linecap="round"/><circle cx="14" cy="8.5" r="4.6" fill="#fbfcfe" stroke="#dfe3ea" stroke-width="0.8"/></svg>
<svg style="left:921px;top:178px" width="16" height="14" viewBox="0 0 16 14"><path d="M0.8 7H13M8 1.2L14 7L8 12.8" fill="none" stroke="#5d9de6" stroke-width="2.6" stroke-linejoin="miter"/></svg>
<div style="left:948.5px;top:179px;width:1px;height:12px;background:#77756f;"></div>
<svg style="left:962.5px;top:175px" width="19" height="18" viewBox="0 0 19 18"><path d="M5 1.5H17Q15.5 3 16 6L17 14Q13 16.5 6.5 15.5L5 6Q4.5 3 5 1.5Z" fill="#f4f7fb" stroke="#cfd6e2" stroke-width="0.6"/><path d="M0.5 6.5L8.5 11.5L0.5 16.5Z" fill="#5d9de6"/></svg>
<svg style="left:990px;top:175px" width="19" height="18" viewBox="0 0 19 18"><path d="M5 1.5H17Q15.5 3 16 6L17 14Q13 16.5 6.5 15.5L5 6Q4.5 3 5 1.5Z" fill="#f7da80" stroke="#d9b24a" stroke-width="0.6"/><path d="M0.5 6.5L8.5 11.5L0.5 16.5Z" fill="#5d9de6"/><circle cx="11" cy="7" r="1" fill="#c9a040"/><circle cx="13.5" cy="11" r="1" fill="#c9a040"/></svg>
<div style="left:1017.3px;top:179px;width:1px;height:12px;background:#77756f;"></div>
<div style="left:1026px;top:173.5px;width:27px;height:24px;border:1px solid #5f5d58;box-sizing:border-box;"></div>
<span class="t" style="left:1039.5px;top:178.50px;font:400 10.5px/14px 'Liberation Sans','Noto Sans CJK SC',sans-serif;color:#5e98dc;transform:translateX(-50%);letter-spacing:0.6px;">Hex</span>
<svg style="left:1057px;top:177px" width="19" height="17" viewBox="0 0 19 17"><path d="M0 1.5H19M0 6H11M0 10.5H19M0 15H11" stroke="#b8b6b0" stroke-width="1.6"/><path d="M18 6H13.5M15.5 3.8L13 6L15.5 8.2M18 15H13.5M15.5 12.8L13 15L15.5 17.2" fill="none" stroke="#b8b6b0" stroke-width="1.3"/></svg>
<span class="t" style="left:1091.5px;top:173.00px;font:400 19px/25px 'Liberation Sans','Noto Sans CJK SC',sans-serif;color:#a9a7a1;transform:translateX(-50%);">¶</span>
<svg style="left:1112px;top:177px" width="16" height="17" viewBox="0 0 16 17"><path d="M0 1H7M9 1H16M0 4H7M9 4H16M0 7H7M9 7H16M0 10H7M9 10H16M0 13H7M9 13H16M0 16H7M9 16H16" stroke="#5d9de6" stroke-width="1.5"/></svg>
<svg style="left:1136.5px;top:175px" width="19" height="19" viewBox="0 0 19 19"><path d="M2 1L9 0.5L17 11L11 15L1 5.5Z" fill="#f7f9fc"/><path d="M11 15L17 11L18.5 16.5L12 17Z" fill="#f2cf6a"/></svg>
<div style="left:1166.0px;top:179px;width:1px;height:12px;background:#77756f;"></div>
<svg style="left:1180px;top:176px" width="15" height="18" viewBox="0 0 15 18"><rect x="0.5" y="0.5" width="14" height="17" rx="1.5" fill="#5d9de6"/><rect x="2.5" y="2.5" width="10" height="3.5" fill="#eaf2fc"/><path d="M2.5 8.5H12.5M2.5 11.5H12.5M2.5 14.5H12.5" stroke="#eaf2fc" stroke-width="1.8" stroke-dasharray="2.2 1.7"/></svg>
<svg style="left:1207.5px;top:175.5px" width="17" height="19" viewBox="0 0 17 19"><path d="M0.5 0.5H7L10.5 4V13.5H0.5Z" fill="#fbfbfb" stroke="#c9d2e0" stroke-width="0.7"/><g transform="translate(4.5 3) scale(1.1)"><path d="M0.5 0.5H7L10.5 4V13.5H0.5Z" fill="#fbfbfb" stroke="#c9d2e0" stroke-width="0.7"/></g><text x="6.2" y="17" font-family="Liberation Sans" font-weight="700" font-size="13" fill="#e9b93c">?</text></svg>
<svg style="left:1232px;top:177px" width="20" height="16" viewBox="0 0 20 16"><path d="M6 2.5H13V0L19.5 4.5L13 9V6.5H6Z" fill="#f2cf6a"/><path d="M14 9.5H7V7L0.5 11.5L7 16V13.5H14Z" fill="#5d9de6"/></svg>
<svg style="left:1258.5px;top:174.5px" width="21" height="21" viewBox="0 0 21 21"><path d="M1.5 0V19.5H21" fill="none" stroke="#f2cf6a" stroke-width="2"/><path d="M4 18V14H6V10H8V5H10V2H11.5V7H13.5V11H15.5V14H17.5V16H19V18Z" fill="#5d9de6"/></svg>
<svg style="left:1287px;top:176px" width="18" height="18" viewBox="0 0 18 18"><path d="M4.5 0.5V9.5M0 5H9" stroke="#5d9de6" stroke-width="2.2"/><path d="M15.5 1L5 16.5" stroke="#5d9de6" stroke-width="2"/><path d="M10.5 15H18" stroke="#5d9de6" stroke-width="2.2"/></svg>
<svg style="left:1314.5px;top:176px" width="18" height="18" viewBox="0 0 18 18"><path d="M7 3H17V5.5L12.5 9.5L17 13.5V16.5H7V13.8H13L8.8 9.5L13 5.6H7Z" fill="#5d9de6"/><path d="M0.8 8L4.5 11.5L11 2.5" fill="none" stroke="#f2cf6a" stroke-width="2.4"/></svg>
<span class="t" style="left:1339.7px;top:177.50px;font:400 11.5px/15px 'Liberation Sans','Noto Sans CJK SC',sans-serif;color:#5e98dc;letter-spacing:-0.617px;">mov</span>
<svg style="left:1369.5px;top:180.5px" width="11" height="10" viewBox="0 0 11 10"><path d="M1 1L5 5L1 9M6 1L10 5L6 9" fill="none" stroke="#6d6b66" stroke-width="1.5"/></svg>
<div style="left:1386.5px;top:179px;width:1px;height:12px;background:#77756f;"></div>
<div style="left:1404px;top:179.5px;width:4px;height:12px;background:#b0aea8;"></div>
<div style="left:1411px;top:179.5px;width:4px;height:12px;background:#b0aea8;"></div>
<span class="t" style="left:442.3px;top:203.00px;font:400 16.3px/21px 'Liberation Sans','Noto Sans CJK SC',sans-serif;color:#d0d0d0;">at</span>
<span class="t" style="left:485px;top:203.00px;font:400 16.3px/21px 'Liberation Sans','Noto Sans CJK SC',sans-serif;color:#d0d0d0;letter-spacing:0.523px;">group.dat</span>
<span class="t" style="left:588.5px;top:203.00px;font:400 16.3px/21px 'Liberation Sans','Noto Sans CJK SC',sans-serif;color:#d0d0d0;letter-spacing:-0.208px;">IdName.Dat</span>
<span class="t" style="left:704px;top:203.00px;font:400 16.3px/21px 'Liberation Sans','Noto Sans CJK SC',sans-serif;color:#d0d0d0;letter-spacing:0.028px;">keyScrip.cfg</span>
<span class="t" style="left:823.75px;top:203.00px;font:400 16.3px/21px 'Liberation Sans','Noto Sans CJK SC',sans-serif;color:#d0d0d0;letter-spacing:-0.243px;">mainbase.ini</span>
<span class="t" style="left:944px;top:203.00px;font:400 16.3px/21px 'Liberation Sans','Noto Sans CJK SC',sans-serif;color:#d0d0d0;letter-spacing:-0.526px;">OcxIDs.Dat</span>
<div style="left:441px;top:226px;width:775.5px;height:1.9px;background:#8a8882;"></div>
<div style="left:1045.5px;top:200px;width:123.5px;height:27.9px;background:#c5d9f1;border-radius:5px 5px 0 0;"></div>
<span class="t" style="left:1052px;top:203.00px;font:700 16px/21px 'Liberation Sans','Noto Sans CJK SC',sans-serif;color:#0a0a0a;">pic00001.111</span>
<svg style="left:1154px;top:210.5px" width="8" height="8" viewBox="0 0 8 8"><path d="M0.7 0.7L7.3 7.3M7.3 0.7L0.7 7.3" stroke="#111" stroke-width="1.3"/></svg>
<svg style="left:1173px;top:207px" width="8" height="11" viewBox="0 0 8 11"><path d="M7 0.8L1.2 5.5L7 10.2" fill="none" stroke="#8a8884" stroke-width="1.3"/></svg>
<svg style="left:1189px;top:207px" width="8" height="11" viewBox="0 0 8 11"><path d="M1 0.8L6.8 5.5L1 10.2" fill="none" stroke="#5f5d59" stroke-width="1.3"/></svg>
<svg style="left:1203.5px;top:207.5px" width="10" height="10" viewBox="0 0 10 10"><path d="M0.5 0.8H9.5M0.8 3.8L5 9L9.2 3.8" fill="none" stroke="#a9a7a1" stroke-width="1.3"/></svg>
<div style="left:441px;top:227.9px;width:776px;height:331.1px;background:#252422;"></div>
<div style="left:441px;top:227.9px;width:65.5px;height:331.1px;background:#2b2a27;"></div>
<div style="left:507.3px;top:267px;width:479.7px;height:20px;background:#353431;"></div>
<div style="left:995.6px;top:267px;width:160.39999999999998px;height:20px;background:#353431;"></div>
<div style="left:507.3px;top:307px;width:479.7px;height:20px;background:#353431;"></div>
<div style="left:995.6px;top:307px;width:160.39999999999998px;height:20px;background:#353431;"></div>
<div style="left:507.3px;top:347px;width:479.7px;height:20px;background:#353431;"></div>
<div style="left:995.6px;top:347px;width:160.39999999999998px;height:20px;background:#353431;"></div>
<div style="left:957px;top:347px;width:30px;height:20px;background:#2371c4;"></div>
<div style="left:1145.6px;top:347px;width:10.399999999999977px;height:20px;background:#2371c4;"></div>
<div style="left:507.3px;top:367px;width:479.7px;height:20px;background:#2371c4;"></div>
<div style="left:995.6px;top:367px;width:160.39999999999998px;height:20px;background:#2371c4;"></div>
<div style="left:507.3px;top:387px;width:479.7px;height:20px;background:#353431;"></div>
<div style="left:995.6px;top:387px;width:160.39999999999998px;height:20px;background:#353431;"></div>
<div style="left:507.3px;top:387px;width:479.7px;height:20px;background:#2371c4;"></div>
<div style="left:995.6px;top:387px;width:160.39999999999998px;height:20px;background:#2371c4;"></div>
<div style="left:507.3px;top:407px;width:479.7px;height:20px;background:#2371c4;"></div>
<div style="left:995.6px;top:407px;width:160.39999999999998px;height:20px;background:#2371c4;"></div>
<div style="left:507.3px;top:427px;width:479.7px;height:20px;background:#353431;"></div>
<div style="left:995.6px;top:427px;width:160.39999999999998px;height:20px;background:#353431;"></div>
<div style="left:507.3px;top:427px;width:479.7px;height:20px;background:#1e3563;"></div>
<div style="left:995.6px;top:427px;width:160.39999999999998px;height:20px;background:#1e3563;"></div>
<div style="left:507.3px;top:427px;width:179.49999999999994px;height:20px;background:#2371c4;"></div>
<div style="left:995.6px;top:427px;width:62px;height:20px;background:#2371c4;"></div>
<div style="left:507.3px;top:467px;width:479.7px;height:20px;background:#353431;"></div>
<div style="left:995.6px;top:467px;width:160.39999999999998px;height:20px;background:#353431;"></div>
<div style="left:507.3px;top:507px;width:479.7px;height:20px;background:#353431;"></div>
<div style="left:995.6px;top:507px;width:160.39999999999998px;height:20px;background:#353431;"></div>
<div style="left:507.3px;top:547px;width:479.7px;height:12px;background:#353431;"></div>
<div style="left:995.6px;top:547px;width:160.39999999999998px;height:12px;background:#353431;"></div>
<div style="left:626.8px;top:247px;width:1px;height:312px;background:#5c5a55;"></div>
<div style="left:746.8px;top:247px;width:1px;height:312px;background:#5c5a55;"></div>
<div style="left:866.8px;top:247px;width:1px;height:312px;background:#5c5a55;"></div>
<span class="t" style="left:517.5px;top:228.80px;font:400 16.6px/20px 'DejaVu Sans Mono','Liberation Mono',monospace;color:#85837e;">0  1  2  3  4  5  6  7  8  9  A  B  C  D  E  F</span>
<span class="t" style="left:997.5px;top:228.80px;font:400 16.6px/20px 'DejaVu Sans Mono','Liberation Mono',monospace;color:#85837e;">0123456789ABCDEF</span>
<svg style="left:698px;top:228.5px" width="8" height="4" viewBox="0 0 8 4"><path d="M0 0H8L4 4Z" fill="#9a9892"/></svg>
<svg style="left:1058.5px;top:228.5px" width="8" height="4" viewBox="0 0 8 4"><path d="M0 0H8L4 4Z" fill="#9a9892"/></svg>
<span class="t" style="left:445.7px;top:247.90px;font:400 16.6px/20px 'DejaVu Sans Mono','Liberation Mono',monospace;color:#9b9994;">0D50h</span>
<span class="t" style="left:512.5px;top:247.90px;font:400 16.6px/20px 'DejaVu Sans Mono','Liberation Mono',monospace;color:#ececec;">00 00 FF FF FF 00 00 00 00 00 00 00 00 00 00 00</span>
<span class="t" style="left:997.5px;top:247.90px;font:400 16.6px/20px 'DejaVu Sans Mono','Liberation Mono',monospace;color:#ececec;">..ÿÿÿ...........</span>
<span class="t" style="left:445.7px;top:267.90px;font:400 16.6px/20px 'DejaVu Sans Mono','Liberation Mono',monospace;color:#9b9994;">0D60h</span>
<span class="t" style="left:512.5px;top:267.90px;font:400 16.6px/20px 'DejaVu Sans Mono','Liberation Mono',monospace;color:#ececec;">00 00 00 01 00 FF FF 96 00 0B 00 43 52 65 61 6C</span>
<span class="t" style="left:997.5px;top:267.90px;font:400 16.6px/20px 'DejaVu Sans Mono','Liberation Mono',monospace;color:#ececec;">.....ÿÿ–...CReal</span>
<span class="t" style="left:445.7px;top:287.90px;font:400 16.6px/20px 'DejaVu Sans Mono','Liberation Mono',monospace;color:#9b9994;">0D70h</span>
<span class="t" style="left:512.5px;top:287.90px;font:400 16.6px/20px 'DejaVu Sans Mono','Liberation Mono',monospace;color:#ececec;">42 69 74 6D 61 70 64 00 BE 00 DD 00 A4 01 01 00</span>
<span class="t" style="left:997.5px;top:287.90px;font:400 16.6px/20px 'DejaVu Sans Mono','Liberation Mono',monospace;color:#ececec;">Bitmapd.¾.Ý.¤...</span>
<span class="t" style="left:445.7px;top:307.90px;font:400 16.6px/20px 'DejaVu Sans Mono','Liberation Mono',monospace;color:#9b9994;">0D80h</span>
<span class="t" style="left:512.5px;top:307.90px;font:400 16.6px/20px 'DejaVu Sans Mono','Liberation Mono',monospace;color:#ececec;">00 00 04 04 04 00 00 00 99 FF 99 00 00 00 00 00</span>
<span class="t" style="left:997.5px;top:307.90px;font:400 16.6px/20px 'DejaVu Sans Mono','Liberation Mono',monospace;color:#ececec;">........™ÿ™.....</span>
<span class="t" style="left:445.7px;top:327.90px;font:400 16.6px/20px 'DejaVu Sans Mono','Liberation Mono',monospace;color:#9b9994;">0D90h</span>
<span class="t" style="left:512.5px;top:327.90px;font:400 16.6px/20px 'DejaVu Sans Mono','Liberation Mono',monospace;color:#ececec;">00 00 FF FF FF 00 00 00 00 00 00 04 00 FF FE FF</span>
<span class="t" style="left:997.5px;top:327.90px;font:400 16.6px/20px 'DejaVu Sans Mono','Liberation Mono',monospace;color:#ececec;">..ÿÿÿ........ÿþÿ</span>
<span class="t" style="left:445.7px;top:347.90px;font:400 16.6px/20px 'DejaVu Sans Mono','Liberation Mono',monospace;color:#9b9994;">0DA0h</span>
<span class="t" style="left:512.5px;top:347.90px;font:400 16.6px/20px 'DejaVu Sans Mono','Liberation Mono',monospace;color:#ececec;">04 6E 00 75 00 6C 00 6C 00 1C 00 FF FE FF 1C 5A</span>
<span class="t" style="left:997.5px;top:347.90px;font:400 16.6px/20px 'DejaVu Sans Mono','Liberation Mono',monospace;color:#ececec;">.n.u.l.l...ÿþÿ.Z</span>
<span class="t" style="left:445.7px;top:367.90px;font:400 16.6px/20px 'DejaVu Sans Mono','Liberation Mono',monospace;color:#9b9994;">0DB0h</span>
<span class="t" style="left:512.5px;top:367.90px;font:400 16.6px/20px 'DejaVu Sans Mono','Liberation Mono',monospace;color:#ececec;">00 6D 00 78 00 68 00 5A 00 33 00 74 00 72 00 4D</span>
<span class="t" style="left:997.5px;top:367.90px;font:400 16.6px/20px 'DejaVu Sans Mono','Liberation Mono',monospace;color:#ececec;">.m.x.h.Z.3.t.r.M</span>
<span class="t" style="left:445.7px;top:387.90px;font:400 16.6px/20px 'DejaVu Sans Mono','Liberation Mono',monospace;color:#9b9994;">0DC0h</span>
<span class="t" style="left:512.5px;top:387.90px;font:400 16.6px/20px 'DejaVu Sans Mono','Liberation Mono',monospace;color:#ececec;">00 57 00 35 00 6E 00 58 00 7A 00 42 00 6D 00 58</span>
<span class="t" style="left:997.5px;top:387.90px;font:400 16.6px/20px 'DejaVu Sans Mono','Liberation Mono',monospace;color:#ececec;">.W.5.n.X.z.B.m.X</span>
<span class="t" style="left:445.7px;top:407.90px;font:400 16.6px/20px 'DejaVu Sans Mono','Liberation Mono',monospace;color:#9b9994;">0DD0h</span>
<span class="t" style="left:512.5px;top:407.90px;font:400 16.6px/20px 'DejaVu Sans Mono','Liberation Mono',monospace;color:#ececec;">00 33 00 4E 00 6A 00 59 00 57 00 52 00 68 00 66</span>
<span class="t" style="left:997.5px;top:407.90px;font:400 16.6px/20px 'DejaVu Sans Mono','Liberation Mono',monospace;color:#ececec;">.3.N.j.Y.W.R.h.f</span>
<span class="t" style="left:445.7px;top:427.90px;font:400 16.6px/20px 'DejaVu Sans Mono','Liberation Mono',monospace;color:#9b9994;">0DE0h</span>
<span class="t" style="left:512.5px;top:427.90px;font:400 16.6px/20px 'DejaVu Sans Mono','Liberation Mono',monospace;color:#ececec;">00 51 00 3D 00 3D 00 00 00 00 00 00 00 00 00 00</span>
<span class="t" style="left:997.5px;top:427.90px;font:400 16.6px/20px 'DejaVu Sans Mono','Liberation Mono',monospace;color:#ececec;">.Q.=.=..........</span>
<span class="t" style="left:445.7px;top:447.90px;font:400 16.6px/20px 'DejaVu Sans Mono','Liberation Mono',monospace;color:#9b9994;">0DF0h</span>
<span class="t" style="left:512.5px;top:447.90px;font:400 16.6px/20px 'DejaVu Sans Mono','Liberation Mono',monospace;color:#ececec;">00 00 00 B8 0B 00 00 00 00 00 00 00 00 00 00 00</span>
<span class="t" style="left:997.5px;top:447.90px;font:400 16.6px/20px 'DejaVu Sans Mono','Liberation Mono',monospace;color:#ececec;">...¸............</span>
<span class="t" style="left:445.7px;top:467.90px;font:400 16.6px/20px 'DejaVu Sans Mono','Liberation Mono',monospace;color:#9b9994;">0E00h</span>
<span class="t" style="left:512.5px;top:467.90px;font:400 16.6px/20px 'DejaVu Sans Mono','Liberation Mono',monospace;color:#ececec;">00 00 00 00 00 00 00 00 00 00 00 00 00 00 00 00</span>
<span class="t" style="left:997.5px;top:467.90px;font:400 16.6px/20px 'DejaVu Sans Mono','Liberation Mono',monospace;color:#ececec;">................</span>
<span class="t" style="left:445.7px;top:487.90px;font:400 16.6px/20px 'DejaVu Sans Mono','Liberation Mono',monospace;color:#9b9994;">0E10h</span>
<span class="t" style="left:512.5px;top:487.90px;font:400 16.6px/20px 'DejaVu Sans Mono','Liberation Mono',monospace;color:#ececec;">00 00 00 00 00 00 00 00 00 00 00 00 00 00 00 00</span>
<span class="t" style="left:997.5px;top:487.90px;font:400 16.6px/20px 'DejaVu Sans Mono','Liberation Mono',monospace;color:#ececec;">................</span>
<span class="t" style="left:445.7px;top:507.90px;font:400 16.6px/20px 'DejaVu Sans Mono','Liberation Mono',monospace;color:#9b9994;">0E20h</span>
<span class="t" style="left:512.5px;top:507.90px;font:400 16.6px/20px 'DejaVu Sans Mono','Liberation Mono',monospace;color:#ececec;">00 00 00 00 00 00 00 00 00 00 00 00 00 00 00 00</span>
<span class="t" style="left:997.5px;top:507.90px;font:400 16.6px/20px 'DejaVu Sans Mono','Liberation Mono',monospace;color:#ececec;">................</span>
<span class="t" style="left:445.7px;top:527.90px;font:400 16.6px/20px 'DejaVu Sans Mono','Liberation Mono',monospace;color:#9b9994;">0E30h</span>
<span class="t" style="left:512.5px;top:527.90px;font:400 16.6px/20px 'DejaVu Sans Mono','Liberation Mono',monospace;color:#ececec;">00 00 00 00 00 00 00 00 00 00 00 00 00 00 00 00</span>
<span class="t" style="left:997.5px;top:527.90px;font:400 16.6px/20px 'DejaVu Sans Mono','Liberation Mono',monospace;color:#ececec;">................</span>
<span class="t" style="left:445.7px;top:547.90px;font:400 16.6px/20px 'DejaVu Sans Mono','Liberation Mono',monospace;color:#9b9994;">0E40h</span>
<span class="t" style="left:512.5px;top:547.90px;font:400 16.6px/20px 'DejaVu Sans Mono','Liberation Mono',monospace;color:#ececec;">00 00 00 00 00 00 00 00 00 00 00 00 00 00 00 00</span>
<div style="left:441px;top:559px;width:776px;height:32px;background:#3e3c38;"></div>
<div style="left:1157px;top:227.9px;width:7px;height:331.1px;background:#2a2927;"></div>
<div style="left:1164px;top:227.9px;width:32.3px;height:331.1px;background:#3b3a37;"></div>
<div style="left:1164px;top:308.1px;width:32.3px;height:64px;background:#696865;"></div>
<div style="left:1164px;top:375.5px;width:32.3px;height:60.3px;background:#696865;"></div>
<svg style="left:1164px;top:228px" width="32" height="331" viewBox="0 0 32 331"><rect x="8.0" y="8.0" width="24.0" height="1.9" fill="#5b5a56"/><rect x="8.0" y="24.0" width="16.0" height="1.9" fill="#5b5a56"/><rect x="8.0" y="40.0" width="24.0" height="1.9" fill="#5b5a56"/><rect x="8.0" y="56.0" width="24.0" height="1.9" fill="#5b5a56"/><rect x="8.0" y="72.0" width="24.0" height="1.9" fill="#5b5a56"/><rect x="0.5" y="16.5" width="1.4" height="2.2" fill="#4d4c48"/><rect x="2.8" y="16.5" width="1.4" height="2.2" fill="#4d4c48"/><rect x="5.1" y="17.7" width="1.4" height="2.2" fill="#4d4c48"/><rect x="7.4" y="17.7" width="1.4" height="2.2" fill="#4d4c48"/><rect x="9.7" y="17.7" width="1.4" height="2.2" fill="#4d4c48"/><rect x="12.0" y="16.5" width="1.4" height="2.2" fill="#4d4c48"/><rect x="14.3" y="16.5" width="1.4" height="2.2" fill="#4d4c48"/><rect x="16.6" y="17.7" width="1.4" height="2.2" fill="#4d4c48"/><rect x="18.9" y="17.7" width="1.4" height="2.2" fill="#4d4c48"/><rect x="21.2" y="16.5" width="1.4" height="2.2" fill="#4d4c48"/><rect x="23.5" y="17.7" width="1.4" height="2.2" fill="#4d4c48"/><rect x="28.1" y="17.1" width="1.4" height="2.2" fill="#4d4c48"/><rect x="30.4" y="16.5" width="1.4" height="2.2" fill="#4d4c48"/><rect x="0.5" y="30.5" width="1.4" height="2.2" fill="#4d4c48"/><rect x="2.8" y="30.5" width="1.4" height="2.2" fill="#4d4c48"/><rect x="5.1" y="31.7" width="1.4" height="2.2" fill="#4d4c48"/><rect x="7.4" y="31.7" width="1.4" height="2.2" fill="#4d4c48"/><rect x="9.7" y="31.7" width="1.4" height="2.2" fill="#4d4c48"/><rect x="12.0" y="30.5" width="1.4" height="2.2" fill="#4d4c48"/><rect x="14.3" y="31.7" width="1.4" height="2.2" fill="#4d4c48"/><rect x="16.6" y="31.7" width="1.4" height="2.2" fill="#4d4c48"/><rect x="18.9" y="30.5" width="1.4" height="2.2" fill="#4d4c48"/><rect x="21.2" y="31.7" width="1.4" height="2.2" fill="#4d4c48"/><rect x="23.5" y="31.1" width="1.4" height="2.2" fill="#4d4c48"/><rect x="25.8" y="31.1" width="1.4" height="2.2" fill="#4d4c48"/><rect x="28.1" y="30.5" width="1.4" height="2.2" fill="#4d4c48"/><rect x="30.4" y="31.7" width="1.4" height="2.2" fill="#4d4c48"/><rect x="8.0" y="82.0" width="8.0" height="1.6" fill="#4f4e4b"/><rect x="5.0" y="224.0" width="2.5" height="2.2" fill="#5a5955"/><rect x="8.0" y="224.0" width="2.5" height="2.2" fill="#5a5955"/><rect x="10.0" y="224.0" width="5.0" height="2.2" fill="#5a5955"/><rect x="16.0" y="224.0" width="3.5" height="2.2" fill="#5a5955"/><rect x="20.0" y="224.0" width="5.0" height="2.2" fill="#5a5955"/><rect x="28.0" y="224.0" width="3.5" height="2.2" fill="#5a5955"/><rect x="1.0" y="238.0" width="3.5" height="2.2" fill="#5a5955"/><rect x="4.0" y="238.0" width="5.0" height="2.2" fill="#5a5955"/><rect x="17.0" y="238.0" width="3.5" height="2.2" fill="#5a5955"/><rect x="21.0" y="238.0" width="3.5" height="2.2" fill="#5a5955"/><rect x="24.0" y="238.0" width="5.0" height="2.2" fill="#5a5955"/><rect x="28.0" y="238.0" width="2.5" height="2.2" fill="#5a5955"/><rect x="12.0" y="244.0" width="2.5" height="2.2" fill="#5a5955"/><rect x="16.0" y="244.0" width="5.0" height="2.2" fill="#5a5955"/><rect x="20.0" y="244.0" width="3.5" height="2.2" fill="#5a5955"/><rect x="24.0" y="244.0" width="2.5" height="2.2" fill="#5a5955"/><rect x="4.0" y="250.0" width="3.5" height="2.2" fill="#5a5955"/><rect x="7.0" y="250.0" width="2.5" height="2.2" fill="#5a5955"/><rect x="11.0" y="250.0" width="3.5" height="2.2" fill="#5a5955"/><rect x="22.0" y="250.0" width="3.5" height="2.2" fill="#5a5955"/><rect x="26.0" y="250.0" width="2.5" height="2.2" fill="#5a5955"/><rect x="1.0" y="255.0" width="5.0" height="2.2" fill="#5a5955"/><rect x="5.0" y="255.0" width="2.5" height="2.2" fill="#5a5955"/><rect x="14.0" y="255.0" width="5.0" height="2.2" fill="#5a5955"/><rect x="18.0" y="255.0" width="5.0" height="2.2" fill="#5a5955"/><rect x="29.0" y="255.0" width="3.5" height="2.2" fill="#5a5955"/><rect x="0.0" y="261.3" width="32.2" height="8.4" fill="#1f78d1"/><rect x="0.0" y="261.3" width="0.7" height="8.4" fill="#2a66b0"/><rect x="1.0" y="259.6" width="2.3" height="1.8" fill="#2a7fd6"/><rect x="3.3" y="261.3" width="0.7" height="8.4" fill="#2a66b0"/><rect x="6.6" y="261.3" width="0.7" height="8.4" fill="#2a66b0"/><rect x="9.9" y="261.3" width="0.7" height="8.4" fill="#2a66b0"/><rect x="10.9" y="259.6" width="2.3" height="1.8" fill="#2a7fd6"/><rect x="13.2" y="261.3" width="0.7" height="8.4" fill="#2a66b0"/><rect x="16.5" y="261.3" width="0.7" height="8.4" fill="#2a66b0"/><rect x="19.8" y="261.3" width="0.7" height="8.4" fill="#2a66b0"/><rect x="20.8" y="259.6" width="2.3" height="1.8" fill="#2a7fd6"/><rect x="23.1" y="261.3" width="0.7" height="8.4" fill="#2a66b0"/><rect x="26.4" y="261.3" width="0.7" height="8.4" fill="#2a66b0"/><rect x="29.7" y="261.3" width="0.7" height="8.4" fill="#2a66b0"/><rect x="30.7" y="259.6" width="2.3" height="1.8" fill="#2a7fd6"/><rect x="6.0" y="269.6" width="3.0" height="1.6" fill="#2a66b0"/></svg>
<div style="left:1196.3px;top:227.9px;width:20.8px;height:327.2px;background:#272624;"></div>
<div style="left:1196.3px;top:230.5px;width:20.8px;height:1px;background:#4a4946;"></div>
<div style="left:1197.3px;top:469.2px;width:18.6px;height:21.7px;background:#605f5c;"></div>
<svg style="left:1201.5px;top:240px" width="10" height="7" viewBox="0 0 10 7"><path d="M1 6L5 1.5L9 6" fill="none" stroke="#a9a7a1" stroke-width="1.6"/></svg>
<svg style="left:1201.5px;top:541px" width="10" height="7" viewBox="0 0 10 7"><path d="M1 1L5 5.5L9 1" fill="none" stroke="#a9a7a1" stroke-width="1.6"/></svg>
<div style="left:1196.3px;top:555.2px;width:20.2px;height:1.3px;background:#8a8883;"></div>
<div style="left:1196.3px;top:556.5px;width:20.2px;height:2.5px;background:#272624;"></div>
<span class="t" style="left:1224px;top:202.50px;font:400 16.5px/21px 'Liberation Sans','Noto Sans CJK SC',sans-serif;color:#d2d2d2;">工作区</span>
<svg style="left:1395px;top:211.5px" width="8" height="5" viewBox="0 0 8 5"><path d="M0 0H8L4 5Z" fill="#d6d6d6"/></svg>
<svg style="left:1409.0px;top:210.0px" width="8" height="8" viewBox="0 0 8 8"><path d="M0.7 0.7L7.3 7.3M7.3 0.7L0.7 7.3" stroke="#d6d6d6" stroke-width="1.3"/></svg>
<div style="left:1220px;top:228px;width:182.3px;height:27.7px;background:#565553;border-radius:5px 5px 0 0;"></div>
<div style="left:1319px;top:228px;width:1px;height:27.7px;background:#3e3c38;"></div>
<span class="t" style="left:1270px;top:232.35px;font:700 15px/20px 'Liberation Sans','Noto Sans CJK SC',sans-serif;color:#e6e6e6;transform:translateX(-50%);">文件</span>
<span class="t" style="left:1360.5px;top:232.35px;font:700 15px/20px 'Liberation Sans','Noto Sans CJK SC',sans-serif;color:#e6e6e6;transform:translateX(-50%);">路径</span>
<div style="left:1403px;top:228px;width:12px;height:139px;background:#272624;"></div>
<div style="left:1403.5px;top:249px;width:11.5px;height:21px;background:#5a5956;"></div>
<svg style="left:1404.5px;top:236px" width="10" height="7" viewBox="0 0 10 7"><path d="M1.5 5.5L5 2L8.5 5.5" fill="none" stroke="#7d7b76" stroke-width="1.4"/></svg>
<svg style="left:1404.5px;top:354px" width="10" height="7" viewBox="0 0 10 7"><path d="M1.5 1.5L5 5L8.5 1.5" fill="none" stroke="#7d7b76" stroke-width="1.4"/></svg>
<svg style="left:1222px;top:260px" width="14" height="13" viewBox="0 0 14 13"><path d="M0.5 1H5L6.3 2.8H11V11.5H0.5Z" fill="#e9c766"/><path d="M3 5H13.5L10.5 12H0.5Z" fill="#fbe08c"/></svg>
<span class="t" style="left:1241.5px;top:257.70px;font:700 15px/20px 'Liberation Sans','Noto Sans CJK SC',sans-serif;color:#e6e6e6;">打开的文件</span>
<span class="t" style="left:1252.7px;top:277.30px;font:400 16px/21px 'Liberation Sans','Noto Sans CJK SC',sans-serif;color:#d6d6d6;letter-spacing:-0.053px;">acti....cfg</span>
<span class="t" style="left:1320.8px;top:277.30px;font:400 16px/21px 'Liberation Sans','Noto Sans CJK SC',sans-serif;color:#7b7974;letter-spacing:-0.014px;">C:\U...ing\</span>
<span class="t" style="left:1252.7px;top:297.25px;font:400 16px/21px 'Liberation Sans','Noto Sans CJK SC',sans-serif;color:#d6d6d6;letter-spacing:-0.047px;">app...cfg</span>
<span class="t" style="left:1320.8px;top:297.25px;font:400 16px/21px 'Liberation Sans','Noto Sans CJK SC',sans-serif;color:#7b7974;letter-spacing:-0.014px;">C:\U...ing\</span>
<span class="t" style="left:1252.7px;top:317.20px;font:400 16px/21px 'Liberation Sans','Noto Sans CJK SC',sans-serif;color:#d6d6d6;letter-spacing:-0.180px;">co...at</span>
<span class="t" style="left:1320.8px;top:317.20px;font:400 16px/21px 'Liberation Sans','Noto Sans CJK SC',sans-serif;color:#7b7974;letter-spacing:-0.014px;">C:\U...ing\</span>
<span class="t" style="left:1252.7px;top:337.15px;font:400 16px/21px 'Liberation Sans','Noto Sans CJK SC',sans-serif;color:#d6d6d6;">con...cfg</span>
<span class="t" style="left:1320.8px;top:337.15px;font:400 16px/21px 'Liberation Sans','Noto Sans CJK SC',sans-serif;color:#7b7974;letter-spacing:-0.014px;">C:\U...ing\</span>
<span class="t" style="left:1252.7px;top:357.10px;font:400 16px/21px 'Liberation Sans','Noto Sans CJK SC',sans-serif;color:#d6d6d6;letter-spacing:-0.322px;">cus...cfg</span>
<span class="t" style="left:1320.8px;top:357.10px;font:400 16px/21px 'Liberation Sans','Noto Sans CJK SC',sans-serif;color:#7b7974;letter-spacing:-0.014px;">C:\U...ing\</span>
<div style="left:1219px;top:367px;width:200px;height:29px;background:#3e3c38;"></div>
<div style="left:1303px;top:367px;width:81px;height:1.2px;background:#7b7974;"></div>
<div style="left:1220px;top:367px;width:83.7px;height:27.8px;background:#73726f;border-radius:6px;"></div>
<svg style="left:1228px;top:373.5px" width="14" height="16" viewBox="0 0 14 16"><path d="M5 0.5H10.5L13.5 3.5V11.5H5Z" fill="#dfe6f0"/><path d="M2.7 2.5H8.2L11.2 5.5V13.5H2.7Z" fill="#eef2f8" stroke="#9aa6b8" stroke-width="0.5"/><path d="M0.5 4.5H6L9 7.5V15.5H0.5Z" fill="#fbfcfe" stroke="#9aa6b8" stroke-width="0.5"/></svg>
<span class="t" style="left:1249.3px;top:371.70px;font:400 14.8px/19px 'Liberation Sans','Noto Sans CJK SC',sans-serif;color:#0a0a0a;letter-spacing:-0.053px;">工作区</span>
<svg style="left:1311px;top:374.5px" width="14" height="14" viewBox="0 0 14 14"><path d="M0.5 0.5H4.5V4.8H9V9.2H13.5V13.5H0.5Z" fill="#f2cf6a" stroke="#d9b24a" stroke-width="0.6"/><path d="M0.5 4.8H4.5V13.5M0.5 9.2H9V13.5" fill="none" stroke="#d9b24a" stroke-width="0.6"/></svg>
<span class="t" style="left:1333px;top:372.20px;font:400 14.8px/19px 'Liberation Sans','Noto Sans CJK SC',sans-serif;color:#d2d2d2;letter-spacing:-0.109px;">项目</span>
<div style="left:1380px;top:373px;width:3px;height:17px;background:#f2cf6a;"></div>
<div style="left:1384px;top:367px;width:40px;height:29px;background:#4b4a47;"></div>
<svg style="left:1391px;top:376px" width="7" height="11" viewBox="0 0 7 11"><path d="M6 0.8L1.2 5.5L6 10.2" fill="none" stroke="#605e5a" stroke-width="1.3"/></svg>
<svg style="left:1408.5px;top:377.0px" width="9" height="9" viewBox="0 0 9 9"><path d="M0.7 0.7L8.3 8.3M8.3 0.7L0.7 8.3" stroke="#d6d6d6" stroke-width="1.3"/></svg>
<span class="t" style="left:1224px;top:400.50px;font:400 16.5px/21px 'Liberation Sans','Noto Sans CJK SC',sans-serif;color:#d2d2d2;letter-spacing:0.500px;">检查器</span>
<svg style="left:1395px;top:409.5px" width="8" height="5" viewBox="0 0 8 5"><path d="M0 0H8L4 5Z" fill="#d6d6d6"/></svg>
<svg style="left:1409.0px;top:408.0px" width="8" height="8" viewBox="0 0 8 8"><path d="M0.7 0.7L7.3 7.3M7.3 0.7L0.7 7.3" stroke="#d6d6d6" stroke-width="1.3"/></svg>
<div style="left:1220px;top:426.3px;width:182.3px;height:27.7px;background:#565553;border-radius:5px 5px 0 0;"></div>
<div style="left:1319px;top:426.3px;width:1px;height:27.7px;background:#3e3c38;"></div>
<span class="t" style="left:1270px;top:430.65px;font:700 15px/20px 'Liberation Sans','Noto Sans CJK SC',sans-serif;color:#e6e6e6;transform:translateX(-50%);">类型</span>
<span class="t" style="left:1360.5px;top:430.65px;font:700 15px/20px 'Liberation Sans','Noto Sans CJK SC',sans-serif;color:#e6e6e6;transform:translateX(-50%);">值</span>
<div style="left:1403px;top:426.3px;width:12px;height:104.69999999999999px;background:#272624;"></div>
<div style="left:1403.5px;top:447px;width:11.5px;height:21.30000000000001px;background:#5a5956;"></div>
<svg style="left:1404.5px;top:434.3px" width="10" height="7" viewBox="0 0 10 7"><path d="M1.5 5.5L5 2L8.5 5.5" fill="none" stroke="#7d7b76" stroke-width="1.4"/></svg>
<svg style="left:1404.5px;top:518px" width="10" height="7" viewBox="0 0 10 7"><path d="M1.5 1.5L5 5L8.5 1.5" fill="none" stroke="#7d7b76" stroke-width="1.4"/></svg>
<div style="left:1220px;top:454.0px;width:182.3px;height:24.1px;background:#474643;"></div>
<div style="left:1220px;top:454.0px;width:182.3px;height:1px;background:#2f2e2b;"></div>
<div style="left:1319px;top:454.0px;width:1px;height:24.1px;background:#2f2e2b;"></div>
<span class="t" style="left:1222px;top:457.80px;font:400 14.8px/19px 'Liberation Sans','Noto Sans CJK SC',sans-serif;color:#e2e2e2;letter-spacing:0.047px;">二进制</span>
<span class="t" style="left:1322.4px;top:457.30px;font:400 15.5px/20px 'Liberation Sans','Noto Sans CJK SC',sans-serif;color:#e2e2e2;letter-spacing:0.455px;">01011010</span>
<div style="left:1220px;top:478.1px;width:182.3px;height:24.1px;background:#413f3c;"></div>
<div style="left:1220px;top:478.1px;width:182.3px;height:1px;background:#2f2e2b;"></div>
<div style="left:1319px;top:478.1px;width:1px;height:24.1px;background:#2f2e2b;"></div>
<span class="t" style="left:1222px;top:481.90px;font:400 14.8px/19px 'Liberation Sans','Noto Sans CJK SC',sans-serif;color:#e2e2e2;">有符号字节</span>
<span class="t" style="left:1322.4px;top:481.40px;font:400 15.5px/20px 'Liberation Sans','Noto Sans CJK SC',sans-serif;color:#e2e2e2;letter-spacing:0.250px;">90</span>
<div style="left:1220px;top:502.2px;width:182.3px;height:24.1px;background:#413f3c;"></div>
<div style="left:1220px;top:502.2px;width:182.3px;height:1px;background:#2f2e2b;"></div>
<div style="left:1319px;top:502.2px;width:1px;height:24.1px;background:#2f2e2b;"></div>
<span class="t" style="left:1222px;top:506.00px;font:400 14.8px/19px 'Liberation Sans','Noto Sans CJK SC',sans-serif;color:#e2e2e2;">无符号字节</span>
<span class="t" style="left:1322.4px;top:505.50px;font:400 15.5px/20px 'Liberation Sans','Noto Sans CJK SC',sans-serif;color:#e2e2e2;letter-spacing:0.250px;">90</span>
<div style="left:1220px;top:526.3px;width:182.3px;height:1px;background:#2f2e2b;"></div>
<div style="left:1220px;top:527.3px;width:182.3px;height:3.7px;background:#413f3c;"></div>
<div style="left:1319px;top:527px;width:1px;height:4px;background:#2f2e2b;"></div>
<div style="left:1219px;top:531px;width:200px;height:29px;background:#3e3c38;"></div>
<div style="left:1303px;top:531px;width:81px;height:1.2px;background:#7b7974;"></div>
<div style="left:1220px;top:531px;width:83.7px;height:27.8px;background:#73726f;border-radius:6px;"></div>
<svg style="left:1227.5px;top:537px" width="13" height="16" viewBox="0 0 13 16"><path d="M8.5 0.5L1 9H6L4 15.5L12 6.5H7Z" fill="#f7c83a" stroke="#e0a820" stroke-width="0.5"/></svg>
<span class="t" style="left:1249.3px;top:535.70px;font:400 14.8px/19px 'Liberation Sans','Noto Sans CJK SC',sans-serif;color:#0a0a0a;letter-spacing:-0.053px;">检查器</span>
<svg style="left:1311px;top:538.5px" width="14" height="15" viewBox="0 0 14 15"><rect x="0.5" y="0.5" width="4.5" height="4.5" fill="#f2cf6a"/><path d="M2.7 5V12.5H7M2.7 7.5H7" fill="none" stroke="#9a9892" stroke-width="0.8" stroke-dasharray="1 1"/><rect x="8" y="5.3" width="4.5" height="4.5" fill="#f2cf6a"/><rect x="8" y="10.3" width="4.5" height="4.5" fill="#f2cf6a"/></svg>
<span class="t" style="left:1333px;top:536.20px;font:400 14.8px/19px 'Liberation Sans','Noto Sans CJK SC',sans-serif;color:#d2d2d2;letter-spacing:-0.109px;">变量</span>
<div style="left:1380px;top:537px;width:3px;height:17px;background:#f2cf6a;"></div>
<div style="left:1384px;top:531px;width:40px;height:29px;background:#4b4a47;"></div>
<svg style="left:1391px;top:540px" width="7" height="11" viewBox="0 0 7 11"><path d="M6 0.8L1.2 5.5L6 10.2" fill="none" stroke="#605e5a" stroke-width="1.3"/></svg>
<svg style="left:1408.5px;top:541.0px" width="9" height="9" viewBox="0 0 9 9"><path d="M0.7 0.7L8.3 8.3M8.3 0.7L0.7 8.3" stroke="#d6d6d6" stroke-width="1.3"/></svg>
<span class="t" style="left:446px;top:564.00px;font:400 16.5px/21px 'Liberation Sans','Noto Sans CJK SC',sans-serif;color:#d2d2d2;letter-spacing:0.500px;">查找结果</span>
<svg style="left:1395px;top:573.5px" width="8" height="5" viewBox="0 0 8 5"><path d="M0 0H8L4 5Z" fill="#d6d6d6"/></svg>
<svg style="left:1409.0px;top:572.0px" width="8" height="8" viewBox="0 0 8 8"><path d="M0.7 0.7L7.3 7.3M7.3 0.7L0.7 7.3" stroke="#d6d6d6" stroke-width="1.3"/></svg>
<div style="left:446px;top:594px;width:26.5px;height:77px;border:1px solid #77756d;box-sizing:border-box;"></div>
<div style="left:475px;top:590px;width:701.6px;height:112px;background:#413f3c;"></div>
<div style="left:478px;top:590px;width:698.6px;height:27.6px;background:#565553;border-radius:0 5px 0 0;"></div>
<div style="left:577px;top:590px;width:1px;height:112px;background:#2f2e2b;"></div>
<div style="left:477.5px;top:617.6px;width:1px;height:85px;background:#34332f;"></div>
<div style="left:478px;top:642px;width:698.6px;height:1px;background:#2f2e2b;"></div>
<div style="left:478px;top:666px;width:698.6px;height:1px;background:#2f2e2b;"></div>
<div style="left:478px;top:690.3px;width:698.6px;height:1px;background:#2f2e2b;"></div>
<span class="t" style="left:527.5px;top:594.50px;font:700 15px/20px 'Liberation Sans','Noto Sans CJK SC',sans-serif;color:#e6e6e6;transform:translateX(-50%);">地址</span>
<span class="t" style="left:610px;top:594.50px;font:700 15px/20px 'Liberation Sans','Noto Sans CJK SC',sans-serif;color:#e6e6e6;transform:translateX(-50%);">值</span>
<div style="left:1403px;top:590px;width:12px;height:110px;background:#272624;"></div>
<div style="left:1403.5px;top:611.5px;width:11.5px;height:21.5px;background:#5a5956;"></div>
<svg style="left:1404.5px;top:598px" width="10" height="7" viewBox="0 0 10 7"><path d="M1.5 5.5L5 2L8.5 5.5" fill="none" stroke="#7d7b76" stroke-width="1.4"/></svg>
<svg style="left:1404.5px;top:687px" width="10" height="7" viewBox="0 0 10 7"><path d="M1.5 1.5L5 5L8.5 1.5" fill="none" stroke="#7d7b76" stroke-width="1.4"/></svg>
<div style="left:441px;top:700.8px;width:980px;height:1.8px;background:#92908a;"></div>
<div style="left:511px;top:702px;width:99px;height:26.6px;background:#787774;border-radius:0 0 6px 6px;"></div>
<svg style="left:449.5px;top:709.5px" width="13" height="11" viewBox="0 0 13 11"><path d="M0 1H9M0 4H13M0 7H9M0 10H13" stroke="#8fb8ec" stroke-width="1.3"/></svg>
<span class="t" style="left:471px;top:706.50px;font:400 14.8px/19px 'Liberation Sans','Noto Sans CJK SC',sans-serif;color:#d2d2d2;letter-spacing:-0.609px;">输出</span>
<svg style="left:517px;top:706px" width="17" height="18" viewBox="0 0 17 18"><g transform="translate(16 0) scale(-0.78 0.78)"><path d="M1.5 17.5L9 10" stroke="#f2cf6a" stroke-width="2.6" stroke-linecap="round"/><circle cx="12.5" cy="6.5" r="5.6" fill="#fbfcfe" stroke="#e6e9ee" stroke-width="0.8"/></g><path d="M0 12h5M0 14.5h7M0 17h5" stroke="#8fb8ec" stroke-width="1"/></svg>
<span class="t" style="left:540.5px;top:706.00px;font:400 14.8px/19px 'Liberation Sans','Noto Sans CJK SC',sans-serif;color:#0a0a0a;letter-spacing:-0.068px;">查找结果</span>
<svg style="left:616px;top:706px" width="17" height="18" viewBox="0 0 17 18"><path d="M9 0L11 4.5L16 5L12.3 8.3L13.5 13L9 10.5Z" fill="#f2cf6a"/><path d="M9 16L13 11.5" stroke="#f2cf6a" stroke-width="2" stroke-linecap="round"/><circle cx="7" cy="7" r="4.6" fill="#fbfcfe" stroke="#dfe3ea" stroke-width="0.7"/><path d="M0 12h5M0 14.5h7M0 17h5" stroke="#8fb8ec" stroke-width="1"/></svg>
<span class="t" style="left:639px;top:706.50px;font:400 14.9px/19px 'Liberation Sans','Noto Sans CJK SC',sans-serif;color:#d2d2d2;letter-spacing:0.068px;">多文件中查找</span>
<svg style="left:746px;top:706px" width="14" height="18" viewBox="0 0 14 18"><text x="3" y="13.5" font-family="Liberation Sans" font-weight="700" font-size="16" fill="#f2cf6a">?</text><path d="M0 11h5M0 13.5h7M0 16h5" stroke="#8fb8ec" stroke-width="1"/></svg>
<span class="t" style="left:768px;top:706.50px;font:400 14.8px/19px 'Liberation Sans','Noto Sans CJK SC',sans-serif;color:#d2d2d2;letter-spacing:-0.109px;">比较</span>
<svg style="left:813.5px;top:706px" width="17" height="18" viewBox="0 0 17 18"><path d="M2 0V12.5H16" fill="none" stroke="#f2cf6a" stroke-width="1.6"/><path d="M4 11.5V8H5.5V4H7V1H8.3V5H10V8H11.5V9.5H13V10.5H14.5V11.5Z" fill="#5d9de6"/><path d="M0 14h5M0 16.5h7M0 19h5" stroke="#8fb8ec" stroke-width="1"/></svg>
<span class="t" style="left:837.5px;top:706.50px;font:400 14.8px/19px 'Liberation Sans','Noto Sans CJK SC',sans-serif;color:#d2d2d2;letter-spacing:-0.453px;">直方图</span>
<svg style="left:898px;top:706px" width="16" height="18" viewBox="0 0 16 18"><path d="M5 1.5H15V4.5H9.5L13 8L9.5 11.5H15V14.5H5V12L9 8L5 4Z" fill="#5d9de6"/><path d="M0 10h5M0 12.5h7M0 15h5" stroke="#8fb8ec" stroke-width="1"/></svg>
<span class="t" style="left:921px;top:706.50px;font:400 14.8px/19px 'Liberation Sans','Noto Sans CJK SC',sans-serif;color:#d2d2d2;letter-spacing:-0.203px;">校验和</span>
<svg style="left:982px;top:708px" width="17" height="14" viewBox="0 0 17 14"><path d="M5 0.5H16.5L12.5 6H1Z" fill="#5d9de6"/><path d="M2 6V10M4.5 6V10M7 6V10M9.5 6V10M12 6V10" stroke="#8fb8ec" stroke-width="1.2"/></svg>
<span class="t" style="left:1005px;top:706.50px;font:400 14.8px/19px 'Liberation Sans','Noto Sans CJK SC',sans-serif;color:#d2d2d2;letter-spacing:-0.109px;">进程</span>
<svg style="left:1050px;top:708px" width="18" height="14" viewBox="0 0 18 14"><text x="3.5" y="6.5" font-family="Liberation Sans" font-size="8" fill="#d2d2d2">ov</text><circle cx="2" cy="4" r="1.6" fill="none" stroke="#d2d2d2" stroke-width="0.9"/><path d="M0 8h5M0 10.5h7M0 13h5" stroke="#8fb8ec" stroke-width="1"/></svg>
<span class="t" style="left:1073.75px;top:706.50px;font:400 14.8px/19px 'Liberation Sans','Noto Sans CJK SC',sans-serif;color:#d2d2d2;letter-spacing:-0.151px;">反汇编器</span>
<span class="t" style="left:807px;top:733.50px;font:400 15.2px/20px 'Liberation Sans','Noto Sans CJK SC',sans-serif;color:#dcdcdc;letter-spacing:0.136px;">开始: 3503 [DAFh]</span>
<span class="t" style="left:943px;top:733.50px;font:400 15.2px/20px 'Liberation Sans','Noto Sans CJK SC',sans-serif;color:#dcdcdc;letter-spacing:0.185px;">选定: 55 [37h]</span>
<span class="t" style="left:1051px;top:733.50px;font:400 15.2px/20px 'Liberation Sans','Noto Sans CJK SC',sans-serif;color:#dcdcdc;letter-spacing:0.021px;">大小: 4,096</span>
<span class="t" style="left:1156.8px;top:733.50px;font:400 15.2px/20px 'Liberation Sans','Noto Sans CJK SC',sans-serif;color:#dcdcdc;letter-spacing:-0.207px;">十六进制(H)</span>
<span class="t" style="left:1247px;top:733.50px;font:400 15.2px/20px 'Liberation Sans','Noto Sans CJK SC',sans-serif;color:#dcdcdc;letter-spacing:-0.018px;">ANSI</span>
<span class="t" style="left:1292px;top:733.50px;font:400 15.2px/20px 'Liberation Sans','Noto Sans CJK SC',sans-serif;color:#dcdcdc;letter-spacing:-0.375px;">小端</span>
<svg style="left:1348.5px;top:737px" width="13" height="13" viewBox="0 0 13 13"><rect x="0.6" y="1.6" width="8" height="9" rx="1" fill="none" stroke="#c8c8c8" stroke-width="1"/><rect x="5" y="5" width="7" height="7.4" rx="1" fill="#3e3c38" stroke="#c8c8c8" stroke-width="1"/><path d="M3 0.6H6.5" stroke="#c8c8c8"/></svg>
<span class="t" style="left:1370.6px;top:733.50px;font:400 15.2px/20px 'Liberation Sans','Noto Sans CJK SC',sans-serif;color:#dcdcdc;letter-spacing:-0.875px;">覆盖</span>
<svg style="left:1408px;top:748px" width="7" height="7" viewBox="0 0 7 7"><path d="M5 0V7M2.5 2.5V7M0 5V7" stroke="#a9a7a1" stroke-width="1.4" stroke-dasharray="1.5 1"/></svg></div>
</body></html>
